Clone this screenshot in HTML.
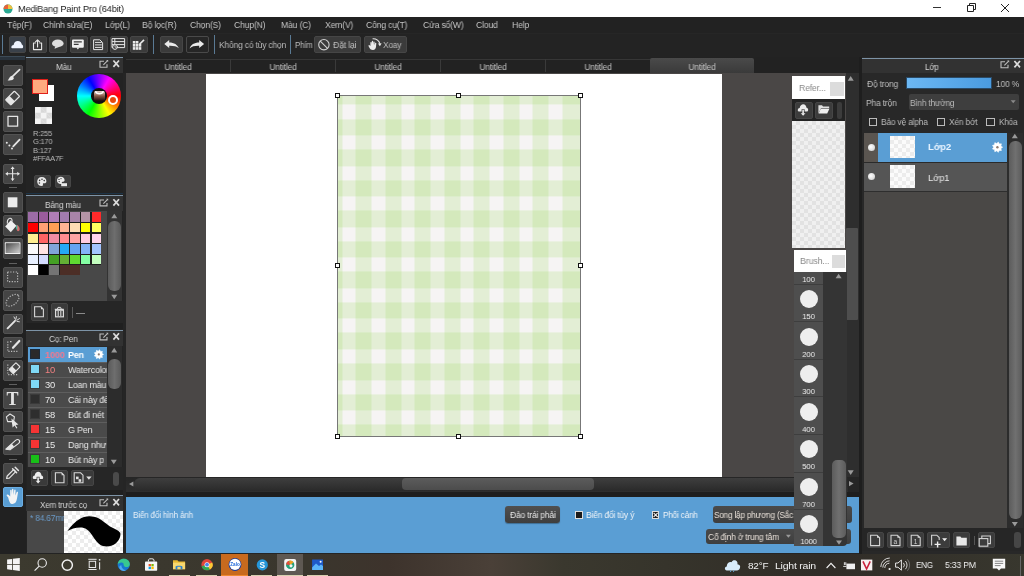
<!DOCTYPE html>
<html><head><meta charset="utf-8">
<style>
*{margin:0;padding:0;box-sizing:border-box}
html,body{width:1024px;height:576px;overflow:hidden;background:#252525;font-family:"Liberation Sans",sans-serif;position:relative}
.a{position:absolute}
.t{position:absolute;white-space:nowrap;color:#c8c8c8;font-size:9.2px;line-height:10px;letter-spacing:-0.2px;transform:scaleX(0.955);transform-origin:0 0}
.tc{transform-origin:50% 0}
.t{will-change:transform}
.btn{position:absolute;background:#3b3b3b;border:1px solid #464646;border-radius:2px}
.tool{position:absolute;left:3px;width:20px;height:20.5px;background:#454545;border:1px solid #525252;border-radius:2px}
.sep{position:absolute;background:#444}
.ph{position:absolute;background:#34312e;border-top:1px solid #8aa4b8}
.ico{position:absolute;overflow:visible}
</style></head><body>

<!-- ============ TITLE BAR ============ -->
<div class="a" style="left:0;top:0;width:1024px;height:17px;background:#fff"></div>
<svg class="ico" style="left:3px;top:4px" width="10" height="10" viewBox="0 0 10 10"><circle cx="5" cy="5" r="4.5" fill="#2aa892"/><path d="M5 .5A4.5 4.5 0 0 0 .5 5L5 5Z" fill="#e8623a"/><path d="M5 .5A4.5 4.5 0 0 1 9.5 5L5 5Z" fill="#f0c040"/></svg>
<div class="t" style="transform:scaleX(0.98);left:17.5px;top:4px;font-size:9.43px;color:#1a1a1a">MediBang Paint Pro (64bit)</div>
<div class="a" style="left:933px;top:7px;width:8px;height:1px;background:#333"></div>
<svg class="a" style="left:960px;top:0" width="20" height="16" viewBox="960 0 20 16"><path d="M967.5 5.5H973.5V11.5H967.5Z M969.5 5.5V3.5H975.5V9.5H973.5" fill="none" stroke="#222" stroke-width="1"/></svg>
<svg class="ico" style="left:1001px;top:4px" width="8" height="8" viewBox="0 0 8 8"><path d="M0 0L8 8M8 0L0 8" stroke="#222" stroke-width="1"/></svg>

<!-- ============ MENU BAR ============ -->
<div class="a" style="left:0;top:17px;width:1024px;height:16px;background:#222"></div>
<div class="t" style="transform:scaleX(0.94);transform-origin:0 0;color:#c4c4c4;left:7px;top:20px">Tệp(F)</div>
<div class="t" style="transform:scaleX(0.94);transform-origin:0 0;color:#c4c4c4;left:43px;top:20px">Chỉnh sửa(E)</div>
<div class="t" style="transform:scaleX(0.94);transform-origin:0 0;color:#c4c4c4;left:105px;top:20px">Lớp(L)</div>
<div class="t" style="transform:scaleX(0.94);transform-origin:0 0;color:#c4c4c4;left:142px;top:20px">Bộ lọc(R)</div>
<div class="t" style="transform:scaleX(0.94);transform-origin:0 0;color:#c4c4c4;left:190px;top:20px">Chọn(S)</div>
<div class="t" style="transform:scaleX(0.94);transform-origin:0 0;color:#c4c4c4;left:234px;top:20px">Chụp(N)</div>
<div class="t" style="transform:scaleX(0.94);transform-origin:0 0;color:#c4c4c4;left:281px;top:20px">Màu (C)</div>
<div class="t" style="transform:scaleX(0.94);transform-origin:0 0;color:#c4c4c4;left:325px;top:20px">Xem(V)</div>
<div class="t" style="transform:scaleX(0.94);transform-origin:0 0;color:#c4c4c4;left:366px;top:20px">Công cụ(T)</div>
<div class="t" style="transform:scaleX(0.94);transform-origin:0 0;color:#c4c4c4;left:423px;top:20px">Cửa sổ(W)</div>
<div class="t" style="transform:scaleX(0.94);transform-origin:0 0;color:#c4c4c4;left:476px;top:20px">Cloud</div>
<div class="t" style="transform:scaleX(0.94);transform-origin:0 0;color:#c4c4c4;left:512px;top:20px">Help</div>

<!-- ============ TOOLBAR ============ -->
<div class="a" style="left:0;top:33px;width:1024px;height:24px;background:#232323"></div>
<div class="a" style="left:2px;top:35px;width:1px;height:19px;background:#5a7a94"></div>
<div class="btn" style="left:9px;top:36px;width:17px;height:17px;background:#3a414a"></div>
<div class="btn" style="left:29px;top:36px;width:17.5px;height:17px"></div>
<div class="btn" style="left:49px;top:36px;width:17.5px;height:17px"></div>
<div class="btn" style="left:70px;top:36px;width:17.5px;height:17px"></div>
<div class="btn" style="left:90px;top:36px;width:17.5px;height:17px"></div>
<div class="btn" style="left:110px;top:36px;width:17.5px;height:17px"></div>
<div class="btn" style="left:130px;top:36px;width:17.5px;height:17px"></div>
<div class="a" style="left:153px;top:35px;width:1px;height:19px;background:#5a7a94"></div>
<div class="btn" style="left:160px;top:36px;width:23px;height:17px"></div>
<div class="btn" style="left:186px;top:36px;width:22.5px;height:17px;background:#262626;border-color:#4a4a4a"></div>
<div class="a" style="left:214px;top:35px;width:1px;height:19px;background:#5a7a94"></div>
<div class="t" style="left:219px;top:40px;font-size:8.90px;color:#bcbcbc">Không có tùy chọn</div>
<div class="a" style="left:290px;top:35px;width:1px;height:19px;background:#5a7a94"></div>
<div class="t" style="left:294.5px;top:41px;font-size:8.27px;color:#bcbcbc">Phím</div>
<div class="btn" style="left:313.5px;top:36px;width:47.5px;height:17px"></div>
<div class="t" style="left:333px;top:40px;font-size:9.12px;color:#bcbcbc">Đặt lại</div>
<div class="btn" style="left:364px;top:36px;width:42.5px;height:17px"></div>
<div class="t" style="left:383px;top:40px;font-size:8.80px;color:#bcbcbc">Xoay</div>

<!-- ============ LEFT TOOLS ============ -->
<div class="a" style="left:0;top:32.5px;width:1024px;height:1px;background:#262626"></div>
<div class="a" style="left:0;top:57px;width:26px;height:497px;background:#212121"></div>
<div class="a" style="left:0;top:56px;width:25px;height:4px;background:#2a333c;border-top:1px solid #3c4a56"></div>
<div class="tool" style="top:65.3px;"></div>
<div class="tool" style="top:88px;"></div>
<div class="tool" style="top:111px;"></div>
<div class="tool" style="top:134.3px;"></div>
<div class="tool" style="top:163.5px;"></div>
<div class="tool" style="top:192.2px;"></div>
<div class="tool" style="top:215px;"></div>
<div class="tool" style="top:238.3px;"></div>
<div class="tool" style="top:267.2px;"></div>
<div class="tool" style="top:290px;"></div>
<div class="tool" style="top:313.5px;"></div>
<div class="tool" style="top:337px;"></div>
<div class="tool" style="top:360px;"></div>
<div class="tool" style="top:388.2px;"></div>
<div class="tool" style="top:411.4px;"></div>
<div class="tool" style="top:434.9px;"></div>
<div class="tool" style="top:463.2px;"></div>
<div class="tool" style="top:486.5px;background:#5a9ed4;border-color:#6aaee4;"></div>
<div class="a" style="left:9px;top:159.3px;width:8px;height:1px;background:#606060"></div>
<div class="a" style="left:9px;top:187.4px;width:8px;height:1px;background:#606060"></div>
<div class="a" style="left:9px;top:262.7px;width:8px;height:1px;background:#606060"></div>
<div class="a" style="left:9px;top:384.4px;width:8px;height:1px;background:#606060"></div>
<div class="a" style="left:9px;top:459.4px;width:8px;height:1px;background:#606060"></div>

<!-- ============ LEFT PANELS ============ -->
<div class="a" style="left:26px;top:57px;width:97px;height:497px;background:#232323"></div>
<div class="a" style="left:26px;top:57px;width:97px;height:1px;background:#7d93a6"></div>
<div class="a" style="left:26px;top:58px;width:97px;height:14.5px;background:#323232"></div>
<div class="t" style="left:55.5px;top:61.5px;font-size:8.59px;color:#d4d4d4">Màu</div>
<div class="a" style="left:32px;top:78.7px;width:16px;height:15.5px;background:#ffaa7f;border:1.3px solid #e0201a"></div>
<div class="a" style="left:39.2px;top:94.2px;width:15.2px;height:6.8px;background:#fff"></div>
<div class="a" style="left:48px;top:85.4px;width:6.4px;height:9px;background:#fff"></div>
<div class="a" style="left:35px;top:106.6px;width:17.2px;height:17.3px;background:#f4f4f4;background-image:linear-gradient(45deg,#d8d8d8 25%,transparent 25%,transparent 75%,#d8d8d8 75%),linear-gradient(45deg,#d8d8d8 25%,transparent 25%,transparent 75%,#d8d8d8 75%);background-size:11.5px 11.5px;background-position:0 0,5.75px 5.75px"></div>
<div class="a" style="left:76.9px;top:73.9px;width:43.8px;height:44.2px;border-radius:50%;background:conic-gradient(from 0deg,#8000ff,#ff00ff 30deg,#ff0000 90deg,#ffff00 150deg,#00ff00 210deg,#00ffff 270deg,#0000ff 330deg,#8000ff 360deg)"></div>
<div class="a" style="left:91px;top:88.2px;width:16px;height:15.6px;border-radius:50%;background:#111"></div>
<div class="a" style="left:94px;top:90.8px;width:10.8px;height:10.4px;border-radius:2px;background:linear-gradient(#e8d0c8,#8a5a48 50%,#180c0a)"></div>
<svg class="a" style="left:0;top:0" width="1024" height="576" viewBox="0 0 1024 576"><path d="M95.4 91.2C96.6 94.6 102.2 94.6 103.4 91.2" fill="none" stroke="#fff" stroke-width="1.4"/></svg>
<div class="a" style="left:107.5px;top:95.1px;width:10.4px;height:10.4px;border-radius:50%;border:2.2px solid #fff;background:#e8480c"></div>
<div class="t" style="left:32.5px;top:130px;font-size:7.84px;line-height:8.3px;color:#bababa">R:255<br>G:170<br>B:127<br>#FFAA7F</div>
<div class="btn" style="left:34px;top:174.9px;width:16.7px;height:13.1px;background:#3e3e3e"></div>
<div class="btn" style="left:54.5px;top:174.9px;width:16.2px;height:13.1px;background:#3e3e3e"></div>
<div class="a" style="left:26px;top:193px;width:97px;height:1px;background:#1d3346"></div>
<div class="a" style="left:26px;top:195px;width:97px;height:1px;background:#7d93a6"></div>
<div class="a" style="left:26px;top:196px;width:97px;height:15px;background:#323232"></div>
<div class="t" style="left:44.8px;top:199.5px;font-size:8.59px;color:#d4d4d4">Bảng màu</div>
<div class="a" style="left:27px;top:211px;width:80px;height:90px;background:#484848"></div>
<div class="a" style="left:27.6px;top:211.8px;width:73.6px;height:53px;background:#1e1e1e"></div>
<div class="a" style="left:27.6px;top:264.7px;width:52.6px;height:10.6px;background:#1e1e1e"></div>
<div class="a" style="left:28.20px;top:212.40px;width:9.4px;height:9.4px;background:#9c6ca6"></div>
<div class="a" style="left:38.75px;top:212.40px;width:9.4px;height:9.4px;background:#9a5c9c"></div>
<div class="a" style="left:49.30px;top:212.40px;width:9.4px;height:9.4px;background:#b07eb6"></div>
<div class="a" style="left:59.85px;top:212.40px;width:9.4px;height:9.4px;background:#a27cae"></div>
<div class="a" style="left:70.40px;top:212.40px;width:9.4px;height:9.4px;background:#a884a8"></div>
<div class="a" style="left:80.95px;top:212.40px;width:9.4px;height:9.4px;background:#b494a6"></div>
<div class="a" style="left:91.50px;top:212.40px;width:9.4px;height:9.4px;background:#ff2a2a"></div>
<div class="a" style="left:28.20px;top:223.00px;width:9.4px;height:9.4px;background:#ff0000"></div>
<div class="a" style="left:38.75px;top:223.00px;width:9.4px;height:9.4px;background:#ffa074"></div>
<div class="a" style="left:49.30px;top:223.00px;width:9.4px;height:9.4px;background:#ffa054"></div>
<div class="a" style="left:59.85px;top:223.00px;width:9.4px;height:9.4px;background:#ffb494"></div>
<div class="a" style="left:70.40px;top:223.00px;width:9.4px;height:9.4px;background:#ffdcb4"></div>
<div class="a" style="left:80.95px;top:223.00px;width:9.4px;height:9.4px;background:#ffff00"></div>
<div class="a" style="left:91.50px;top:223.00px;width:9.4px;height:9.4px;background:#ffff60"></div>
<div class="a" style="left:28.20px;top:233.60px;width:9.4px;height:9.4px;background:#ffee90"></div>
<div class="a" style="left:38.75px;top:233.60px;width:9.4px;height:9.4px;background:#ff6464"></div>
<div class="a" style="left:49.30px;top:233.60px;width:9.4px;height:9.4px;background:#f08ca4"></div>
<div class="a" style="left:59.85px;top:233.60px;width:9.4px;height:9.4px;background:#ff8c90"></div>
<div class="a" style="left:70.40px;top:233.60px;width:9.4px;height:9.4px;background:#ffa4a4"></div>
<div class="a" style="left:80.95px;top:233.60px;width:9.4px;height:9.4px;background:#ffcce0"></div>
<div class="a" style="left:91.50px;top:233.60px;width:9.4px;height:9.4px;background:#ffd4ec"></div>
<div class="a" style="left:28.20px;top:244.20px;width:9.4px;height:9.4px;background:#fafafa"></div>
<div class="a" style="left:38.75px;top:244.20px;width:9.4px;height:9.4px;background:#ffe4e4"></div>
<div class="a" style="left:49.30px;top:244.20px;width:9.4px;height:9.4px;background:#80a4d8"></div>
<div class="a" style="left:59.85px;top:244.20px;width:9.4px;height:9.4px;background:#24a8f4"></div>
<div class="a" style="left:70.40px;top:244.20px;width:9.4px;height:9.4px;background:#64a4f0"></div>
<div class="a" style="left:80.95px;top:244.20px;width:9.4px;height:9.4px;background:#84b4f8"></div>
<div class="a" style="left:91.50px;top:244.20px;width:9.4px;height:9.4px;background:#a4c4ff"></div>
<div class="a" style="left:28.20px;top:254.80px;width:9.4px;height:9.4px;background:#e8f0ff"></div>
<div class="a" style="left:38.75px;top:254.80px;width:9.4px;height:9.4px;background:#d4dcff"></div>
<div class="a" style="left:49.30px;top:254.80px;width:9.4px;height:9.4px;background:#44a024"></div>
<div class="a" style="left:59.85px;top:254.80px;width:9.4px;height:9.4px;background:#64b034"></div>
<div class="a" style="left:70.40px;top:254.80px;width:9.4px;height:9.4px;background:#60d830"></div>
<div class="a" style="left:80.95px;top:254.80px;width:9.4px;height:9.4px;background:#84ffa4"></div>
<div class="a" style="left:91.50px;top:254.80px;width:9.4px;height:9.4px;background:#c4ffc0"></div>
<div class="a" style="left:28.20px;top:265.40px;width:9.4px;height:9.4px;background:#ffffff"></div>
<div class="a" style="left:38.75px;top:265.40px;width:9.4px;height:9.4px;background:#000000"></div>
<div class="a" style="left:49.30px;top:265.40px;width:9.4px;height:9.4px;background:#747474"></div>
<div class="a" style="left:59.85px;top:265.40px;width:10.55px;height:9.4px;background:#4c2e26"></div>
<div class="a" style="left:70.40px;top:265.40px;width:9.4px;height:9.4px;background:#4c2e26"></div>
<div class="a" style="left:107px;top:211px;width:15px;height:90px;background:#333333"></div>
<div class="a" style="left:108.3px;top:220.7px;width:12.5px;height:70.8px;border-radius:6px;background:linear-gradient(90deg,#5a5a5a,#6e6e6e,#5a5a5a)"></div>
<div class="a" style="left:27px;top:301px;width:96px;height:22px;background:#262626"></div>
<div class="btn" style="left:31px;top:303.3px;width:16.75px;height:18px;background:#3a3a3a"></div>
<div class="btn" style="left:51.3px;top:303.3px;width:16.5px;height:18px;background:#3a3a3a"></div>
<div class="a" style="left:72.4px;top:307px;width:1px;height:11px;background:#5a5a5a"></div>
<div class="a" style="left:76px;top:313px;width:9px;height:1px;background:#8a8a8a"></div>
<div class="a" style="left:26px;top:323px;width:97px;height:6px;background:#202020"></div>
<div class="a" style="left:26px;top:329.5px;width:97px;height:1px;background:#7d93a6"></div>
<div class="a" style="left:26px;top:330.5px;width:97px;height:15px;background:#323232"></div>
<div class="t" style="left:49px;top:334px;font-size:8.69px;color:#d4d4d4">Cọ: Pen</div>
<div class="a" style="left:27px;top:345.5px;width:80px;height:121px;background:#2a2a2a"></div>
<div class="a" style="left:107px;top:345.5px;width:15px;height:121px;background:#2c2c2c"></div>
<div class="a" style="left:108.3px;top:358.8px;width:12.5px;height:30px;border-radius:6px;background:linear-gradient(90deg,#5a5a5a,#6e6e6e,#5a5a5a)"></div>
<div class="a" style="left:28.2px;top:347px;width:78.5px;height:14.5px;background:#5a9ed4;overflow:hidden"><div class="a" style="left:2px;top:2.3px;width:10.2px;height:10.2px;background:#2a2a2a;border:1px solid #1a2a3a"></div><div class="t" style="left:16.5px;top:3.2px;font-size:9.6px;color:#f07890;font-weight:bold">1000</div><div class="t" style="left:40.2px;top:3.2px;font-size:9.4px;color:#fff;font-weight:bold">Pen</div></div>
<div class="a" style="left:28.2px;top:362px;width:78.5px;height:14.5px;background:#4a4a4a;overflow:hidden"><div class="a" style="left:2px;top:2.3px;width:10.2px;height:10.2px;background:#7fd8f4;border:1px solid #3a3a3a"></div><div class="t" style="left:16.5px;top:3.2px;font-size:9.4px;color:#f08080">10</div><div class="t" style="left:40.2px;top:3.2px;font-size:9.4px;color:#e8e8e8">Watercolor</div></div>
<div class="a" style="left:28.2px;top:377px;width:78.5px;height:14.5px;background:#4a4a4a;overflow:hidden"><div class="a" style="left:2px;top:2.3px;width:10.2px;height:10.2px;background:#7fd8f4;border:1px solid #3a3a3a"></div><div class="t" style="left:16.5px;top:3.2px;font-size:9.4px;color:#e8e8e8">30</div><div class="t" style="left:40.2px;top:3.2px;font-size:9.4px;color:#e8e8e8">Loan màu</div></div>
<div class="a" style="left:28.2px;top:392px;width:78.5px;height:14.5px;background:#4a4a4a;overflow:hidden"><div class="a" style="left:2px;top:2.3px;width:10.2px;height:10.2px;background:#2e2e2e;border:1px solid #3a3a3a"></div><div class="t" style="left:16.5px;top:3.2px;font-size:9.4px;color:#e8e8e8">70</div><div class="t" style="left:40.2px;top:3.2px;font-size:9.4px;color:#e8e8e8">Cái này để</div></div>
<div class="a" style="left:28.2px;top:407px;width:78.5px;height:14.5px;background:#4a4a4a;overflow:hidden"><div class="a" style="left:2px;top:2.3px;width:10.2px;height:10.2px;background:#2e2e2e;border:1px solid #3a3a3a"></div><div class="t" style="left:16.5px;top:3.2px;font-size:9.4px;color:#e8e8e8">58</div><div class="t" style="left:40.2px;top:3.2px;font-size:9.4px;color:#e8e8e8">Bút đi nét</div></div>
<div class="a" style="left:28.2px;top:422px;width:78.5px;height:14.5px;background:#4a4a4a;overflow:hidden"><div class="a" style="left:2px;top:2.3px;width:10.2px;height:10.2px;background:#f43434;border:1px solid #3a3a3a"></div><div class="t" style="left:16.5px;top:3.2px;font-size:9.4px;color:#e8e8e8">15</div><div class="t" style="left:40.2px;top:3.2px;font-size:9.4px;color:#e8e8e8">G Pen</div></div>
<div class="a" style="left:28.2px;top:437px;width:78.5px;height:14.5px;background:#4a4a4a;overflow:hidden"><div class="a" style="left:2px;top:2.3px;width:10.2px;height:10.2px;background:#f43434;border:1px solid #3a3a3a"></div><div class="t" style="left:16.5px;top:3.2px;font-size:9.4px;color:#e8e8e8">15</div><div class="t" style="left:40.2px;top:3.2px;font-size:9.4px;color:#e8e8e8">Dạng như</div></div>
<div class="a" style="left:28.2px;top:452px;width:78.5px;height:14.5px;background:#4a4a4a;overflow:hidden"><div class="a" style="left:2px;top:2.3px;width:10.2px;height:10.2px;background:#18c018;border:1px solid #3a3a3a"></div><div class="t" style="left:16.5px;top:3.2px;font-size:9.4px;color:#e8e8e8">10</div><div class="t" style="left:40.2px;top:3.2px;font-size:9.4px;color:#e8e8e8">Bút này p</div></div>
<div class="a" style="left:28.2px;top:361.5px;width:78.5px;height:0.5px;background:#5e5e5e"></div>
<div class="a" style="left:28.2px;top:376.5px;width:78.5px;height:0.5px;background:#5e5e5e"></div>
<div class="a" style="left:28.2px;top:391.5px;width:78.5px;height:0.5px;background:#5e5e5e"></div>
<div class="a" style="left:28.2px;top:406.5px;width:78.5px;height:0.5px;background:#5e5e5e"></div>
<div class="a" style="left:28.2px;top:421.5px;width:78.5px;height:0.5px;background:#5e5e5e"></div>
<div class="a" style="left:28.2px;top:436.5px;width:78.5px;height:0.5px;background:#5e5e5e"></div>
<div class="a" style="left:28.2px;top:451.5px;width:78.5px;height:0.5px;background:#5e5e5e"></div>
<div class="a" style="left:28.2px;top:466.5px;width:78.5px;height:0.5px;background:#5e5e5e"></div>
<div class="a" style="left:27px;top:466.5px;width:96px;height:23px;background:#262626"></div>
<div class="btn" style="left:31.3px;top:469.8px;width:16.6px;height:16.6px;background:#3a3a3a"></div>
<div class="btn" style="left:51.3px;top:469.8px;width:16.6px;height:16.6px;background:#3a3a3a"></div>
<div class="btn" style="left:71.3px;top:469.8px;width:22.4px;height:16.6px;background:#3a3a3a"></div>
<div class="a" style="left:112.7px;top:472px;width:6.7px;height:14px;border-radius:3px;background:#4a4a4a"></div>
<div class="a" style="left:26px;top:489.5px;width:97px;height:5px;background:#202020"></div>
<div class="a" style="left:26px;top:495px;width:97px;height:1px;background:#7d93a6"></div>
<div class="a" style="left:26px;top:496px;width:97px;height:14.6px;background:#323232"></div>
<div class="t" style="left:39.5px;top:499.5px;font-size:8.48px;color:#d4d4d4">Xem trước cọ</div>
<div class="a" style="left:27px;top:510.6px;width:37px;height:42.5px;background:#484848"></div>
<div class="t" style="left:30.3px;top:513px;font-size:8.80px;color:#6a9ac8">* 84.67mm</div>
<div class="a" style="left:63.5px;top:510.6px;width:59.5px;height:42.5px;background:#fff;background-image:linear-gradient(45deg,#ececec 25%,transparent 25%,transparent 75%,#ececec 75%),linear-gradient(45deg,#ececec 25%,transparent 25%,transparent 75%,#ececec 75%);background-size:8px 8px;background-position:0 0,4px 4px"></div>
<svg class="a" style="left:0;top:0" width="1024" height="576" viewBox="0 0 1024 576"><path d="M67.3 531C71 526 77 519 84 516.9C89 515.5 94 516.2 98 518C102 520 106 524 110 526.4C114 528.4 118.6 530 120.3 533C121 536.4 119 540.4 116 543.2C112 546.2 107 547 103 546C99 545 96 541 93 536.5C90 531.8 87 528.4 82 527.6C77 527 71 529 67.3 531Z" fill="#000"/></svg>

<!-- ============ TABS ============ -->
<div class="a" style="left:123px;top:57px;width:739px;height:16px;background:#222"></div>
<div class="a" style="left:126px;top:58.5px;width:524px;height:1px;background:#363636"></div>
<div class="a" style="left:650px;top:57.5px;width:104px;height:15.5px;background:linear-gradient(#4a4a4a,#3a3a3a);border-radius:2px 2px 0 0"></div>
<div class="a" style="left:230px;top:59px;width:1px;height:13px;background:#3a3a3a"></div>
<div class="a" style="left:335px;top:59px;width:1px;height:13px;background:#3a3a3a"></div>
<div class="a" style="left:440px;top:59px;width:1px;height:13px;background:#3a3a3a"></div>
<div class="a" style="left:545px;top:59px;width:1px;height:13px;background:#3a3a3a"></div>
<div class="t tc" style="left:158px;width:40px;text-align:center;top:61.5px;font-size:8.90px;color:#c4c4c4">Untitled</div>
<div class="t tc" style="left:262.5px;width:40px;text-align:center;top:61.5px;font-size:8.90px;color:#c4c4c4">Untitled</div>
<div class="t tc" style="left:367.5px;width:40px;text-align:center;top:61.5px;font-size:8.90px;color:#c4c4c4">Untitled</div>
<div class="t tc" style="left:472.5px;width:40px;text-align:center;top:61.5px;font-size:8.90px;color:#c4c4c4">Untitled</div>
<div class="t tc" style="left:577.5px;width:40px;text-align:center;top:61.5px;font-size:8.90px;color:#c4c4c4">Untitled</div>
<div class="t tc" style="left:681.5px;width:40px;text-align:center;top:61.5px;font-size:8.90px;color:#c4c4c4">Untitled</div>

<!-- ============ CANVAS AREA ============ -->
<!-- h scrollbar -->
<div class="a" style="left:126px;top:477px;width:722px;height:20px;background:#2b2b2b"></div>
<div class="a" style="left:126px;top:477px;width:722px;height:15px;background:linear-gradient(#262626,#2e2e2e)"></div>
<div class="a" style="left:134px;top:477.5px;width:712px;height:13.5px;background:linear-gradient(#3e3e3e,#2a2a2a);border-radius:6px"></div>
<div class="a" style="left:402px;top:477.8px;width:192px;height:12.6px;background:linear-gradient(#5c5c5c,#4c4c4c);border-radius:4px"></div>
<div class="a" style="left:126px;top:492px;width:733px;height:5px;background:#1e1e1e"></div>


<div class="a" style="left:126px;top:497px;width:733px;height:56px;background:#5a9ed4"></div>
<div class="t" style="left:133px;top:509.5px;font-size:8.5px;color:#e8f0f8">Biến đổi hình ảnh</div>
<div class="a" style="left:505px;top:506px;width:55.3px;height:17px;background:linear-gradient(#505050,#3e3e3e);border-radius:3px;box-shadow:0 1px 1px rgba(0,0,0,.3)"></div>
<div class="t" style="left:510.3px;top:509.5px;font-size:8.90px;color:#e4e4e4">Đảo trái phải</div>
<div class="a" style="left:575px;top:511.2px;width:7.5px;height:7.5px;background:#1a1a1a;border:1px solid #ddd"></div>
<div class="t" style="left:586.3px;top:509.5px;font-size:8.90px;color:#f0f4f8">Biến đổi tùy ý</div>
<div class="a" style="left:651.9px;top:511.2px;width:7.5px;height:7.5px;background:#1a1a1a;border:1px solid #ddd"></div>
<div class="t" style="left:663.4px;top:509.5px;font-size:8.59px;color:#f0f4f8">Phối cảnh</div>
<div class="a" style="left:712.5px;top:506px;width:139px;height:16.5px;background:linear-gradient(#4a4a4a,#3e3e3e);border-radius:3px"></div>
<div class="t" style="left:714.4px;top:509.5px;font-size:8.59px;color:#e8e0d8">Song lập phương (Sắc nét)</div>
<div class="a" style="left:706.2px;top:528.7px;width:145px;height:15px;background:linear-gradient(#4a4a4a,#3e3e3e);border-radius:3px"></div>
<div class="t" style="left:708px;top:531.5px;font-size:8.80px;color:#e8e0d8">Cố định ở trung tâm</div>

<div class="a" style="left:126px;top:73px;width:722px;height:404px;background:#4a4746"></div>
<div class="a" style="left:206px;top:74px;width:516px;height:403px;background:#fff"></div>
<div class="a" style="left:338px;top:96px;width:242px;height:340px;background-color:#f6f4f4;
background-image:repeating-linear-gradient(90deg,rgba(150,215,90,0.2) 0px,rgba(150,215,90,0.2) 16px,rgba(150,215,90,0) 16px,rgba(150,215,90,0) 29.47px),repeating-linear-gradient(180deg,rgba(150,215,90,0.2) 0px,rgba(150,215,90,0.2) 16.5px,rgba(150,215,90,0) 16.5px,rgba(150,215,90,0) 30.56px);
background-position:-11.5px 0,0 -7.6px"></div>
<div class="a" style="left:337px;top:95px;width:244px;height:342px;border:1px solid #777"></div>
<div class="a" style="left:335.0px;top:93.0px;width:5px;height:5px;background:#fff;border:1px solid #111"></div>
<div class="a" style="left:456.0px;top:93.0px;width:5px;height:5px;background:#fff;border:1px solid #111"></div>
<div class="a" style="left:578.0px;top:93.0px;width:5px;height:5px;background:#fff;border:1px solid #111"></div>
<div class="a" style="left:335.0px;top:263.0px;width:5px;height:5px;background:#fff;border:1px solid #111"></div>
<div class="a" style="left:578.0px;top:263.0px;width:5px;height:5px;background:#fff;border:1px solid #111"></div>
<div class="a" style="left:335.0px;top:434.0px;width:5px;height:5px;background:#fff;border:1px solid #111"></div>
<div class="a" style="left:456.0px;top:434.0px;width:5px;height:5px;background:#fff;border:1px solid #111"></div>
<div class="a" style="left:578.0px;top:434.0px;width:5px;height:5px;background:#fff;border:1px solid #111"></div>
<div class="a" style="left:792px;top:76px;width:53px;height:23px;background:#fff"></div>
<div class="t" style="left:799px;top:83px;font-size:9.12px;color:#8a8a8a">Refer...</div>
<div class="a" style="left:830px;top:82px;width:14px;height:13.5px;background:#dcdcdc"></div>
<div class="a" style="left:792px;top:99px;width:53px;height:22px;background:#232323"></div>
<div class="btn" style="left:795px;top:101.8px;width:17.6px;height:17.2px;background:#3c3c3c"></div>
<div class="btn" style="left:815.3px;top:101.8px;width:17.7px;height:17.2px;background:#3c3c3c"></div>
<div class="a" style="left:836.6px;top:101.8px;width:5.5px;height:17.2px;background:#3c3c3c;border-radius:2px"></div>
<div class="a" style="left:792.3px;top:121px;width:53.2px;height:126.5px;background:#f0f0f0;background-image:linear-gradient(45deg,#e2e2e2 25%,transparent 25%,transparent 75%,#e2e2e2 75%),linear-gradient(45deg,#e2e2e2 25%,transparent 25%,transparent 75%,#e2e2e2 75%);background-size:8px 8px;background-position:0 0,4px 4px"></div>
<div class="a" style="left:845.5px;top:73px;width:13px;height:404px;background:#2e2e2e"></div>
<div class="a" style="left:846px;top:228px;width:12px;height:92px;background:#4e4e4e;border-radius:1px"></div>
<div class="a" style="left:858.5px;top:73px;width:3.5px;height:424px;background:#3a3a3a"></div>
<div class="a" style="left:794px;top:249.6px;width:52px;height:22.3px;background:#fff"></div>
<div class="t" style="left:800px;top:256px;font-size:9.33px;color:#8a8a8a">Brush...</div>
<div class="a" style="left:831.5px;top:255px;width:13px;height:13px;background:#dcdcdc"></div>
<div class="a" style="left:794px;top:272px;width:29px;height:274px;background:#4e4e4e"></div>
<div class="a" style="left:822.8px;top:272px;width:24.5px;height:274px;background:#343434;border-radius:0 0 4px 0"></div>
<div class="a" style="left:832px;top:460px;width:13.5px;height:78px;background:linear-gradient(90deg,#5c5c5c,#707070,#5c5c5c);border-radius:5px"></div>
<div class="t tc" style="left:794px;width:29px;text-align:center;top:274.5px;font-size:8.06px;color:#f0f0f0">100</div>
<div class="a" style="left:794px;top:283.8px;width:29px;height:1px;background:#3e3e3e"></div>
<div class="a" style="left:800px;top:290.0px;width:18px;height:18px;border-radius:50%;background:#eeeeee"></div>
<div class="t tc" style="left:794px;width:29px;text-align:center;top:312.1px;font-size:8.06px;color:#f0f0f0">150</div>
<div class="a" style="left:794px;top:321.3px;width:29px;height:1px;background:#3e3e3e"></div>
<div class="a" style="left:800px;top:327.6px;width:18px;height:18px;border-radius:50%;background:#eeeeee"></div>
<div class="t tc" style="left:794px;width:29px;text-align:center;top:349.6px;font-size:8.06px;color:#f0f0f0">200</div>
<div class="a" style="left:794px;top:358.9px;width:29px;height:1px;background:#3e3e3e"></div>
<div class="a" style="left:800px;top:365.1px;width:18px;height:18px;border-radius:50%;background:#eeeeee"></div>
<div class="t tc" style="left:794px;width:29px;text-align:center;top:387.1px;font-size:8.06px;color:#f0f0f0">300</div>
<div class="a" style="left:794px;top:396.4px;width:29px;height:1px;background:#3e3e3e"></div>
<div class="a" style="left:800px;top:402.6px;width:18px;height:18px;border-radius:50%;background:#eeeeee"></div>
<div class="t tc" style="left:794px;width:29px;text-align:center;top:424.7px;font-size:8.06px;color:#f0f0f0">400</div>
<div class="a" style="left:794px;top:433.9px;width:29px;height:1px;background:#3e3e3e"></div>
<div class="a" style="left:800px;top:440.2px;width:18px;height:18px;border-radius:50%;background:#eeeeee"></div>
<div class="t tc" style="left:794px;width:29px;text-align:center;top:462.2px;font-size:8.06px;color:#f0f0f0">500</div>
<div class="a" style="left:794px;top:471.5px;width:29px;height:1px;background:#3e3e3e"></div>
<div class="a" style="left:800px;top:477.8px;width:18px;height:18px;border-radius:50%;background:#eeeeee"></div>
<div class="t tc" style="left:794px;width:29px;text-align:center;top:499.8px;font-size:8.06px;color:#f0f0f0">700</div>
<div class="a" style="left:794px;top:509.0px;width:29px;height:1px;background:#3e3e3e"></div>
<div class="a" style="left:800px;top:515.3px;width:18px;height:18px;border-radius:50%;background:#eeeeee"></div>
<div class="t tc" style="left:794px;width:29px;text-align:center;top:537.3px;font-size:8.06px;color:#f0f0f0">1000</div>

<!-- ============ BLUE OPTIONS PANEL ============ -->

<!-- ============ LAYER PANEL ============ -->
<div class="a" style="left:862px;top:57px;width:162px;height:497px;background:#282828"></div>
<div class="a" style="left:858.5px;top:57px;width:3.5px;height:497px;background:#1e1e1e"></div>
<div class="a" style="left:862px;top:57.5px;width:162px;height:1px;background:#7d93a6"></div>
<div class="a" style="left:862px;top:58.5px;width:162px;height:14px;background:#323232"></div>
<div class="t" style="left:924.5px;top:62px;font-size:8.37px;color:#d4d4d4">Lớp</div>
<div class="t" style="left:866.5px;top:79.0px;font-size:8.90px;color:#bfbfbf">Độ trong</div>
<div class="a" style="left:905.5px;top:77.4px;width:86px;height:11.6px;background:linear-gradient(90deg,#6cb8f4,#4a9be0);border:1px solid #2a4a66"></div>
<div class="t" style="left:996.3px;top:79.0px;font-size:8.90px;color:#bfbfbf">100 %</div>
<div class="t" style="left:866px;top:98.0px;font-size:8.90px;color:#bfbfbf">Pha trộn</div>
<div class="a" style="left:908.8px;top:94.3px;width:110.4px;height:15.5px;background:#3e3e3e;border-radius:2px"></div>
<div class="t" style="left:910px;top:98.0px;font-size:8.69px;color:#bababa">Bình thường</div>
<div class="a" style="left:869px;top:117.6px;width:8.2px;height:8.2px;border:1px solid #bbb"></div>
<div class="t" style="left:880.6px;top:117px;font-size:8.80px;color:#bababa">Bảo vệ alpha</div>
<div class="a" style="left:937.2px;top:117.6px;width:8.2px;height:8.2px;border:1px solid #bbb"></div>
<div class="t" style="left:949.2px;top:117px;font-size:8.80px;color:#bababa">Xén bớt</div>
<div class="a" style="left:986.4px;top:117.6px;width:8.2px;height:8.2px;border:1px solid #bbb"></div>
<div class="t" style="left:998.7px;top:117px;font-size:8.59px;color:#bababa">Khóa</div>
<div class="a" style="left:863.9px;top:132.5px;width:143.5px;height:396px;background:#4a4846"></div>
<div class="a" style="left:863.9px;top:132.9px;width:143.5px;height:29px;background:#5a9ed4"></div>
<div class="a" style="left:863.9px;top:132.9px;width:14.3px;height:29px;background:#5a5550"></div>
<div class="a" style="left:863.9px;top:161.9px;width:143.5px;height:1px;background:#2a2a2a"></div>
<div class="a" style="left:863.9px;top:163px;width:143.5px;height:27.8px;background:#555555"></div>
<div class="a" style="left:863.9px;top:190.8px;width:143.5px;height:1px;background:#2e2e2e"></div>
<div class="a" style="left:867.6px;top:143.5px;width:7px;height:7px;border-radius:50%;background:radial-gradient(circle at 40% 40%,#fff,#c8c8c8)"></div>
<div class="a" style="left:867.6px;top:173.4px;width:7px;height:7px;border-radius:50%;background:radial-gradient(circle at 40% 40%,#fff,#c8c8c8)"></div>
<div class="a" style="left:889.6px;top:135.8px;width:25.8px;height:22.2px;background:#fbfbfb;background-image:linear-gradient(45deg,#ececec 25%,transparent 25%,transparent 75%,#ececec 75%),linear-gradient(45deg,#ececec 25%,transparent 25%,transparent 75%,#ececec 75%);background-size:8px 8px;background-position:0 0,4px 4px"></div>
<div class="a" style="left:889.6px;top:165px;width:25.8px;height:23.3px;background:#fbfbfb;background-image:linear-gradient(45deg,#ececec 25%,transparent 25%,transparent 75%,#ececec 75%),linear-gradient(45deg,#ececec 25%,transparent 25%,transparent 75%,#ececec 75%);background-size:8px 8px;background-position:0 0,4px 4px"></div>
<div class="t" style="left:928px;top:142px;font-size:9.96px;color:#e8f4ff;font-weight:bold">Lớp2</div>
<div class="t" style="left:928px;top:172.5px;font-size:9.96px;color:#e8e8e8">Lớp1</div>
<div class="a" style="left:1007.4px;top:132.5px;width:16px;height:396px;background:#2c2c2c"></div>
<div class="a" style="left:1008.6px;top:140.8px;width:13.9px;height:378.6px;background:linear-gradient(90deg,#5c5c5c,#707070,#5c5c5c);border-radius:6px"></div>
<div class="a" style="left:862px;top:528.4px;width:162px;height:23px;background:#262626"></div>
<div class="btn" style="left:866.7px;top:532.2px;width:16.9px;height:16px;background:#3c3c3c"></div>
<div class="btn" style="left:887.2px;top:532.2px;width:16.7px;height:16px;background:#3c3c3c"></div>
<div class="btn" style="left:907.2px;top:532.2px;width:16.9px;height:16px;background:#3c3c3c"></div>
<div class="btn" style="left:927.4px;top:532.2px;width:22.4px;height:16px;background:#3c3c3c"></div>
<div class="btn" style="left:953.1px;top:532.2px;width:16.9px;height:16px;background:#3c3c3c"></div>
<div class="btn" style="left:978.2px;top:532.2px;width:17.3px;height:16px;background:#3c3c3c"></div>
<div class="a" style="left:974px;top:536px;width:1px;height:9px;background:#555"></div>
<div class="a" style="left:1014.3px;top:532.2px;width:6.7px;height:16px;border-radius:3px;background:#464646"></div>

<!-- ============ TASKBAR ============ -->
<div class="a" style="left:0;top:553.5px;width:1024px;height:22.5px;background:linear-gradient(90deg,#3c3a2f 0%,#3a362d 30%,#3d332c 38%,#4a4038 48%,#3a382e 55%,#36342b 65%,#302c27 80%,#38372e 100%)"></div>
<div class="a" style="left:221.2px;top:553.5px;width:26.7px;height:22.5px;background:#c86a1e"></div>
<div class="a" style="left:276.9px;top:553.5px;width:26.3px;height:22.5px;background:#5e5852"></div>
<div class="a" style="left:168.8px;top:574.5px;width:21.1px;height:1.5px;background:#d8d0b0"></div>
<div class="a" style="left:196px;top:574.5px;width:21.0px;height:1.5px;background:#d8d0b0"></div>
<div class="a" style="left:221.2px;top:574.5px;width:26.7px;height:1.5px;background:#f08a30"></div>
<div class="a" style="left:251.4px;top:574.5px;width:21.1px;height:1.5px;background:#d8d0b0"></div>
<div class="a" style="left:276.9px;top:574.5px;width:26.3px;height:1.5px;background:#d8d0b0"></div>
<div class="a" style="left:306.7px;top:574.5px;width:21.1px;height:1.5px;background:#d8d0b0"></div>
<div class="t" style="transform:scaleX(1.06);left:747.6px;top:560.6px;font-size:9.4px;color:#f0f0f0">82°F</div>
<div class="t" style="transform:scaleX(1.12);left:774.8px;top:560.6px;font-size:9.4px;color:#f0f0f0">Light rain</div>
<div class="t" style="transform:scaleX(0.9);left:916.4px;top:559.8px;font-size:9px;color:#f0f0f0">ENG</div>
<div class="t" style="transform:scaleX(0.9);left:945.4px;top:559.8px;font-size:9.6px;color:#f0f0f0">5:33 PM</div>
<div class="a" style="left:1020px;top:556px;width:1px;height:20px;background:#666"></div>
<!-- ICONS1 -->
<svg class="a" style="left:0;top:0;z-index:50" width="1024" height="576" viewBox="0 0 1024 576">
<g fill="none" stroke="#e6e6e6" stroke-width="1.1" stroke-linecap="round" stroke-linejoin="round">
<!-- toolbar: share -->
<path d="M35.3 43H33.5V49.6H41.6V43H39.8"/>
<path d="M37.55 47V39.8M35.5 41.9L37.55 39.8L39.6 41.9"/>
<!-- doc -->
<path d="M94 39.8H99.8L102.6 42.6V49.6H94Z" stroke-width="1"/>
<path d="M95.4 42.4H101.4M95.4 44.9H101.4M95.4 47.4H101.4" stroke-width="1"/>
<!-- table clock -->
<rect x="112.4" y="38.6" width="12.2" height="9" stroke-width="1"/>
<path d="M112.4 41.6H124.6M112.4 44.6H124.6M114.8 38.6V44.6" stroke-width="1"/>
<circle cx="115" cy="47" r="2.4" fill="#3b3b3b" stroke-width="1"/><path d="M115 45.8V47.2H116.2" stroke-width="0.7"/>
<!-- no sign -->
<circle cx="323.9" cy="44.7" r="5.2" stroke="#d0d0d0" stroke-width="1.1"/>
<path d="M320.3 41.1L327.5 48.3" stroke="#d0d0d0" stroke-width="1.1"/>
</g>
<g fill="#eaeaea">
<!-- cloud -->
<path d="M12 48.3C11 48.3 11 45.2 13.6 45.1C13.8 42.6 15.6 41 17.8 41C20.2 41 21.6 42.6 21.8 44.6C23.4 44.8 23.6 48.3 22.3 48.3Z" fill="#eef4ff"/>
<!-- speech bubble -->
<ellipse cx="57.8" cy="43.4" rx="5.8" ry="3.8" fill="#dedede"/>
<path d="M55.2 46.3L54.6 48.8L58.6 46.9Z" fill="#dedede"/>
<!-- comment -->
<rect x="72" y="39.4" width="11.8" height="8.4" rx="1" fill="#f0f0f0"/>
<path d="M76.4 47.6L77.9 49.4L79.4 47.6Z" fill="#f0f0f0"/>
<path d="M73.8 41.9H81.8M73.8 44.4H78.6" stroke="#3b3b3b" stroke-width="1.2"/>
<!-- grid pencil -->
<rect x="132.8" y="41" width="2.6" height="2.6"/><rect x="135.8" y="41" width="2.6" height="2.6"/>
<rect x="132.8" y="44" width="2.6" height="2.7"/><rect x="135.8" y="44" width="2.6" height="2.7"/><rect x="138.8" y="44" width="2.5" height="2.7"/>
<rect x="132.8" y="47.1" width="2.6" height="2.7"/><rect x="135.8" y="47.1" width="2.6" height="2.7"/><rect x="138.8" y="47.1" width="2.5" height="2.7"/>
<path d="M139.2 43.4L143.4 39.2L144.6 40.4L140.4 44.6L138.8 44.9Z"/>
<!-- undo -->
<path d="M164.3 44.1L169.2 40.1V42.4C174.2 42.4 177.6 44.6 178.7 48.3C176.6 46.3 173.6 45.7 169.2 45.8V48.1Z"/>
<!-- redo -->
<path d="M204.1 44.1L199.2 40.1V42.4C194.2 42.4 190.8 44.6 189.6 48.5C191.8 46.3 194.8 45.7 199.2 45.8V48.1Z"/>
<!-- hand rotate -->
<path d="M369 47C368.3 45.6 368.4 44.8 369.2 45L370.4 46V42.6C370.4 41.8 371.6 41.8 371.6 42.6V45L371.8 41.4C371.8 40.6 373.1 40.6 373.1 41.4V44.8L373.4 42C373.4 41.3 374.6 41.3 374.6 42V45.2L375.1 43.2C375.2 42.5 376.4 42.6 376.3 43.3L376 47C375.6 49 374.6 50 373 50C371.2 50 370.2 49.4 369 47Z"/>
<path d="M372.6 38.8C376.4 38.6 379.4 40.8 379.8 43.8" fill="none" stroke="#eaeaea" stroke-width="1.1"/>
<path d="M378 43.4L379.9 46.2L381.6 43.2Z"/>
</g>
</svg>
<!-- /ICONS1 -->
<!-- ICONS2 -->
<svg class="a" style="left:0;top:0;z-index:50" width="1024" height="576" viewBox="0 0 1024 576">
<g fill="none" stroke="#e4e4e4" stroke-width="1.2" stroke-linecap="round" stroke-linejoin="round">
<!-- 1 brush -->
<path d="M19.6 69.6L12.6 76.4" stroke-width="1.7"/>
<!-- 2 eraser outline -->
<g transform="translate(12.6 98.1) rotate(45)"><rect x="-3.7" y="-6.2" width="7.4" height="12.4" rx="0.6" stroke-width="1.2"/></g>
<!-- 3 rect -->
<rect x="8" y="116.3" width="9.6" height="9.9" stroke-width="1.3"/>
<!-- 4 line/pen -->
<path d="M19.6 139.6L13.2 146.4" stroke-width="1.8"/>
<!-- 5 move -->
<path d="M12.6 167.3V180.1M6.2 173.7H19" stroke-width="1.1"/>
<!-- 9 select rect dotted -->
<rect x="7.6" y="272" width="10" height="9.6" stroke="#bdbdbd" stroke-dasharray="1.2 1.5" stroke-width="1.2" stroke-linecap="butt"/>
<!-- 10 lasso dotted -->
<ellipse cx="12.5" cy="300.3" rx="7.6" ry="4.4" transform="rotate(-40 12.5 300.3)" stroke="#b0b0b0" stroke-dasharray="1.3 1.3" stroke-width="1.2" stroke-linecap="butt"/>
<!-- 11 wand -->
<path d="M7.6 328.3L15 320.8" stroke-width="1.9"/>
<path d="M15.8 319.6L16.4 316.6M16.8 320.3L19.4 318.6M17 321.4L19.4 321.8M15 318.8L14 316.9" stroke-width="0.9"/>
<!-- 12 select pen -->
<path d="M7.8 341.6V351.4H17.4" stroke="#bdbdbd" stroke-dasharray="1.2 1.4" stroke-width="1.2" stroke-linecap="butt"/>
<path d="M10.2 341.6H12" stroke-dasharray="1.2 1.4" stroke-linecap="butt"/>
<path d="M19.3 341L13 347.8" stroke-width="2.2"/>
<!-- 13 select eraser -->
<path d="M7.8 364.6V374.6H17.4" stroke="#bdbdbd" stroke-dasharray="1.2 1.4" stroke-width="1.2" stroke-linecap="butt"/>
<g transform="translate(14.6 368.2) rotate(45)"><rect x="-2.9" y="-4.8" width="5.8" height="9.6" rx="0.5" stroke-width="1.1"/></g>
<!-- 15 polygon select -->
<path d="M10 414L14.4 416.8L13.6 421.6H7.6L6.4 416.9Z" stroke-width="1.1"/>
<!-- 16 cutter -->
<path d="M5.8 449.2L15.6 440.4C17 439.2 18.6 439.6 19.3 440.4C20 441.3 19.6 442.6 18.4 443.6L10 449.8Z" stroke-width="1.1"/>
<!-- 17 eyedropper -->
<path d="M6.6 478.4L7.2 476L13.6 469.6L15.7 471.7L9.3 478.1Z" stroke-width="1.2"/>
<path d="M12.6 468.7L16.6 472.7M15.2 467.3L18.4 470.5" stroke-width="1.5"/>
<!-- gradient border -->
<rect x="5.3" y="242.9" width="14.6" height="10.5" stroke="#f0f0f0" stroke-width="1.1"/>
</g>
<g fill="#e6e6e6">
<path d="M11.8 75.8L14 78C13.2 80.2 11 80.8 7.6 80.4C9 79.4 9 77 11.8 75.8Z"/>
<g transform="translate(12.6 98.1) rotate(45)"><rect x="-3.7" y="0.6" width="7.4" height="5.6"/></g>
<circle cx="6.8" cy="142.8" r="1"/><circle cx="9.4" cy="145.6" r="1"/><circle cx="12" cy="148.4" r="1"/>
<path d="M12.6 166.6L10.6 169H14.6ZM12.6 180.8L10.6 178.4H14.6ZM5.5 173.7L7.9 171.7V175.7ZM19.7 173.7L17.3 171.7V175.7Z"/>
<rect x="7.8" y="197.3" width="9.6" height="10" fill="#ececec"/>
<g transform="translate(14.6 368.2) rotate(45)"><rect x="-2.9" y="0.4" width="5.8" height="4.4"/></g>
<path d="M11.4 418.5L18.4 424.6L15.6 425L17.4 428L16.4 428.6L14.6 425.6L12.6 427.4Z"/>
<path d="M5.8 449.2L11.8 443.8L14 446.6L10 449.8Z"/>
<!-- bucket -->
<path d="M5.2 226.6L10.8 232.2L16.4 225.8L10.8 220.2Z" fill="#f0f0f0"/>
<path d="M7.4 223.6C7 221.2 8 218.4 9.8 218.2C11.6 218 12.6 220 11.8 222" fill="none" stroke="#e6e6e6" stroke-width="1.1"/>
<path d="M16.6 224.8C18.6 225.6 19.8 227.6 19.6 229.6C19.4 231.4 17.4 231.8 17 230.2Z" fill="#d86a6a"/>
<path d="M16.6 224.8C17.6 226 17.6 228.4 17 230.2C16 229 16 226.6 16.6 224.8Z" fill="#40d0b0"/>
<!-- T -->
<text x="12.6" y="404.9" text-anchor="middle" font-family="Liberation Serif" font-size="18" font-weight="bold" fill="#e4e4e4">T</text>
<!-- hand -->
<path d="M8.2 497.4C7.2 496.2 6.2 495.6 6.8 494.8C7.6 494 9.2 495.2 10.2 496.4V490.6C10.2 489.6 11.6 489.6 11.6 490.6V495L12 489.4C12 488.4 13.4 488.4 13.4 489.4L13.6 495L14.2 490.2C14.3 489.2 15.7 489.2 15.6 490.2L15.4 495.6L16.6 492.2C16.9 491.4 18.2 491.6 18 492.6L17 498.6C16.4 502.4 14.8 504 12.4 504C10.6 504 9.6 503 8.2 497.4Z" fill="#f4f4f4"/>
</g>
<defs><linearGradient id="gr1" x1="0" y1="0" x2="1" y2="1"><stop offset="0" stop-color="#4a4a4a"/><stop offset="1" stop-color="#d0d0d0"/></linearGradient></defs>
<rect x="5.8" y="243.4" width="13.6" height="9.5" fill="url(#gr1)"/>
</svg>
<!-- /ICONS2 -->
<!-- ICONS3 -->
<svg class="a" style="left:0;top:0;z-index:50" width="1024" height="576" viewBox="0 0 1024 576">
<path d="M104 61.3H100V67.2H107V64.3" fill="none" stroke="#bfbfbf" stroke-width="1.1"/><path d="M103.4 64.9L107.6 60.7" stroke="#bfbfbf" stroke-width="1.1"/><path d="M106.2 60.1L108.2 60.1L108.2 62.1Z" fill="#bfbfbf"/><path d="M113.4 60.5L119 66.9M119 60.5L113.4 66.9" stroke="#dcdcdc" stroke-width="1.7"/>
<path d="M104 200.0H100V205.89999999999998H107V203.0" fill="none" stroke="#bfbfbf" stroke-width="1.1"/><path d="M103.4 203.6L107.6 199.39999999999998" stroke="#bfbfbf" stroke-width="1.1"/><path d="M106.2 198.79999999999998L108.2 198.79999999999998L108.2 200.79999999999998Z" fill="#bfbfbf"/><path d="M113.4 199.2L119 205.6M119 199.2L113.4 205.6" stroke="#dcdcdc" stroke-width="1.7"/>
<path d="M104 334.0H100V339.9H107V337.0" fill="none" stroke="#bfbfbf" stroke-width="1.1"/><path d="M103.4 337.59999999999997L107.6 333.4" stroke="#bfbfbf" stroke-width="1.1"/><path d="M106.2 332.8L108.2 332.8L108.2 334.8Z" fill="#bfbfbf"/><path d="M113.4 333.2L119 339.59999999999997M119 333.2L113.4 339.59999999999997" stroke="#dcdcdc" stroke-width="1.7"/>
<path d="M104 499.8H100V505.7H107V502.8" fill="none" stroke="#bfbfbf" stroke-width="1.1"/><path d="M103.4 503.4L107.6 499.2" stroke="#bfbfbf" stroke-width="1.1"/><path d="M106.2 498.6L108.2 498.6L108.2 500.6Z" fill="#bfbfbf"/><path d="M113.4 499L119 505.4M119 499L113.4 505.4" stroke="#dcdcdc" stroke-width="1.7"/>
<path d="M1005 61.8H1001V67.7H1008V64.8" fill="none" stroke="#bfbfbf" stroke-width="1.1"/><path d="M1004.4 65.4L1008.6 61.2" stroke="#bfbfbf" stroke-width="1.1"/><path d="M1007.2 60.6L1009.2 60.6L1009.2 62.6Z" fill="#bfbfbf"/><path d="M1014.4 61L1020 67.4M1020 61L1014.4 67.4" stroke="#dcdcdc" stroke-width="1.7"/>
<path d="M41.8 177C44.6 177 46.4 179 46.4 181.2C46.4 183 45 183.4 44 183.2C43 183 42.6 183.8 43 184.6C43.4 185.6 42.6 186 41.8 186C39 186 37.2 184 37.2 181.4C37.2 179 39.2 177 41.8 177Z" fill="#eaeaea"/>
<circle cx="39.6" cy="180.4" r="0.8" fill="#3a3a3a"/><circle cx="42" cy="179.2" r="0.8" fill="#3a3a3a"/><circle cx="44.2" cy="180.6" r="0.8" fill="#3a3a3a"/><circle cx="39.4" cy="183" r="0.8" fill="#3a3a3a"/>
<path d="M60.8 176.8C63 176.8 64.6 178.4 64.6 180.2C64.6 181.6 63.4 181.8 62.6 181.8C61.8 181.8 61.6 182.6 62 183.2C62.2 184 61.6 184 60.8 184C58.6 184 57 182.4 57 180.4C57 178.4 58.6 176.8 60.8 176.8Z" fill="#eaeaea"/>
<circle cx="59" cy="179.4" r="0.7" fill="#3a3a3a"/><circle cx="61" cy="178.6" r="0.7" fill="#3a3a3a"/><circle cx="59.2" cy="181.6" r="0.7" fill="#3a3a3a"/>
<rect x="61.2" y="183.2" width="5.8" height="3" fill="#eaeaea"/>
<path d="M34.6 306.8H41L43.4 309.2V316.8H34.6Z" fill="none" stroke="#d8d8d8" stroke-width="1.1"/><path d="M41 306.8V309.2H43.4Z" fill="#d8d8d8"/>
<path d="M54.8 309.4H63.8" stroke="#dcdcdc" stroke-width="1.3"/><path d="M57.4 309L58 307.4H60.6L61.2 309" fill="none" stroke="#dcdcdc" stroke-width="1"/><rect x="55.6" y="310.2" width="7.8" height="6.6" fill="none" stroke="#dcdcdc" stroke-width="1.2"/><path d="M58.2 311V316M60.8 311V316" stroke="#dcdcdc" stroke-width="1.1"/>
<polygon points="103.50,354.40 101.90,355.53 102.40,357.42 100.45,357.26 99.62,359.03 98.23,357.65 96.45,358.47 96.27,356.52 94.38,356.01 95.50,354.40 94.38,352.79 96.27,352.28 96.45,350.33 98.23,351.15 99.62,349.77 100.45,351.54 102.40,351.38 101.90,353.27" fill="#ffffff" stroke="#ffffff" stroke-width="0.6" stroke-linejoin="round"/><circle cx="98.8" cy="354.4" r="1.1" fill="#8a7a70"/>
<polygon points="1002.60,147.20 1000.88,148.47 1001.38,150.54 999.25,150.40 998.30,152.32 996.76,150.84 994.80,151.70 994.57,149.58 992.51,148.98 993.70,147.20 992.51,145.42 994.57,144.82 994.80,142.70 996.76,143.56 998.30,142.08 999.25,144.00 1001.38,143.86 1000.88,145.93" fill="#ffffff" stroke="#ffffff" stroke-width="0.6" stroke-linejoin="round"/><circle cx="997.4" cy="147.2" r="1.2" fill="#8a7a70"/>
<path d="M111.3 218.3L114.3 213.7L117.3 218.3Z" fill="#9a9a9a"/>
<path d="M111.3 294.7L114.3 299.3L117.3 294.7Z" fill="#9a9a9a"/>
<path d="M111.2 352.59999999999997L114.2 347.8L117.2 352.59999999999997Z" fill="#9a9a9a"/>
<path d="M110.8 459.7L113.8 464.3L116.8 459.7Z" fill="#9a9a9a"/>
<path d="M847.7 80.7L850.7 76.10000000000001L853.7 80.7Z" fill="#9a9a9a"/>
<path d="M847.7 470.3L850.7 475.09999999999997L853.7 470.3Z" fill="#9a9a9a"/>
<path d="M849 481L853.6 483.6L849 486.2Z" fill="#9a9a9a"/>
<path d="M835.6 278.3L838.6 273.7L841.6 278.3Z" fill="#9a9a9a"/>
<path d="M836.0 540.4L839 544.8000000000001L842.0 540.4Z" fill="#9a9a9a"/>
<path d="M1011.8 138.3L1014.8 133.7L1017.8 138.3Z" fill="#9a9a9a"/>
<path d="M1011.8 522.0L1014.8 526.5999999999999L1017.8 522.0Z" fill="#9a9a9a"/>
<path d="M129 484L133.4 481.4V486.6Z" fill="#9a9a9a"/>
<path d="M1010.7 100.3L1013.2 103.3L1015.7 100.3Z" fill="#8a8a8a"/>
<path d="M785.9 534.7L788.4 537.7L790.9 534.7Z" fill="#9a9a9a"/>
<path d="M33.7 479.0C32.5 479.0 32.300000000000004 475.8 34.7 475.6C35.1 473.0 36.7 471.8 38.1 471.8C40.1 471.8 41.300000000000004 473.40000000000003 41.5 475.40000000000003C43.7 475.6 43.5 479.0 42.300000000000004 479.0Z" fill="#ececec"/><path d="M38.1 476.8V482.40000000000003" stroke="#3a3a3a" stroke-width="3"/><path d="M38.1 477.40000000000003V481.40000000000003" stroke="#ececec" stroke-width="1.6"/><path d="M35.7 480.8L38.1 483.40000000000003L40.5 480.8Z" fill="#ececec"/>
<path d="M798.7 111.4C797.5 111.4 797.3000000000001 108.2 799.7 108.0C800.1 105.4 801.7 104.2 803.1 104.2C805.1 104.2 806.3000000000001 105.8 806.5 107.8C808.7 108.0 808.5 111.4 807.3000000000001 111.4Z" fill="#ececec"/><path d="M803.1 109.2V114.8" stroke="#3a3a3a" stroke-width="3"/><path d="M803.1 109.8V113.8" stroke="#ececec" stroke-width="1.6"/><path d="M800.7 113.2L803.1 115.8L805.5 113.2Z" fill="#ececec"/>
<path d="M55.4 472.8H61.6L64 475.2V482.8H55.4Z" fill="none" stroke="#d8d8d8" stroke-width="1.1"/><path d="M61.6 472.8V475.2H64Z" fill="#d8d8d8"/>
<path d="M74.2 472.8H80.6L83 475.2V482.8H74.2Z" fill="none" stroke="#d8d8d8" stroke-width="1.1"/><rect x="76" y="476.6" width="2.6" height="2.6" fill="#e0e0e0"/><rect x="78.6" y="479.2" width="2.6" height="2.6" fill="#e0e0e0"/>
<path d="M86.2 476.59999999999997L88.9 479.8L91.60000000000001 476.59999999999997Z" fill="#e0e0e0"/>
<path d="M818.4 113.6V105.2H822L823 106.4H829.2V108.2H821L818.4 113.6Z" fill="#e0e0e0"/><path d="M818.6 113.6L820.8 108.8H829.4L827.2 113.6Z" fill="#f0f0f0"/>
<path d="M653.6 512.9L657.7 517M657.7 512.9L653.6 517" stroke="#e8e8e8" stroke-width="1.1"/>
<path d="M870.6 535.2H877.0L879.6 537.8000000000001V545.6H870.6Z" fill="none" stroke="#d4d4d4" stroke-width="1.1"/><path d="M877.0 535.2V537.8000000000001H879.6Z" fill="#d4d4d4"/>
<path d="M891 535.2H897.4L900 537.8000000000001V545.6H891Z" fill="none" stroke="#d4d4d4" stroke-width="1.1"/><path d="M897.4 535.2V537.8000000000001H900Z" fill="#d4d4d4"/>
<text x="895.4" y="544" text-anchor="middle" font-family="Liberation Sans" font-size="6.5" fill="#d4d4d4">a</text>
<path d="M911.2 535.2H917.6L920.2 537.8000000000001V545.6H911.2Z" fill="none" stroke="#d4d4d4" stroke-width="1.1"/><path d="M917.6 535.2V537.8000000000001H920.2Z" fill="#d4d4d4"/>
<text x="915.6" y="544" text-anchor="middle" font-family="Liberation Sans" font-size="6.5" fill="#d4d4d4">1</text>
<path d="M931.6 545.6V535.2H936.8L939.2 537.6V540" fill="none" stroke="#d4d4d4" stroke-width="1.1"/><path d="M937.6 541.4V547.4M934.6 544.4H940.6" stroke="#f0f0f0" stroke-width="1.4"/>
<path d="M942.1 538.3L944.6 541.3L947.1 538.3Z" fill="#f0f0f0"/>
<path d="M956.4 545.6V536.6H960.4L961.4 537.8H966.8V545.6Z" fill="#e8e8e8"/>
<rect x="979.2" y="538.6" width="8.6" height="7.6" fill="none" stroke="#d4d4d4" stroke-width="1.1"/><path d="M981.8 538.4V536H990.4V543.6H988" fill="none" stroke="#d4d4d4" stroke-width="1.1"/>
</svg>
<!-- /ICONS3 -->
<!-- ICONS4 -->
<svg class="a" style="left:0;top:0;z-index:50" width="1024" height="576" viewBox="0 0 1024 576">
<path d="M7.1 559.6L12.1 558.9V564H7.1Z M12.9 558.8L19.8 557.9V564H12.9Z M7.1 564.8H12.1V569.9L7.1 569.2Z M12.9 564.8H19.8V570.9L12.9 570Z" fill="#f4f4f4"/>
<circle cx="42.2" cy="563" r="4.2" fill="none" stroke="#ececec" stroke-width="1.1"/><path d="M39.2 566.1L34.6 570.7" stroke="#ececec" stroke-width="1.2"/>
<circle cx="67.3" cy="565.1" r="5.1" fill="none" stroke="#f0f0f0" stroke-width="1.5"/>
<path d="M88.3 559.3H96.6M88.3 569.5H96.6" stroke="#e8e8e8" stroke-width="1"/><rect x="89.2" y="561.3" width="6.4" height="6.2" fill="none" stroke="#e8e8e8" stroke-width="1"/><path d="M99.6 562.2V569.6" stroke="#e8e8e8" stroke-width="1.1"/><circle cx="99.6" cy="559.8" r="0.9" fill="#e8e8e8"/>
<circle cx="123.7" cy="564.8" r="6.1" fill="#1878d0"/><path d="M117.7 564C118.2 560.4 121 558.7 123.9 558.7C127.6 558.7 129.9 561.4 129.8 564.3C129.8 566.3 128.2 567.2 126.4 567.1C124.6 567 123.6 565.6 123.6 564.4C123.6 563.2 122.6 562.4 121.2 562.6C119.6 562.8 118.4 563.6 117.7 564Z" fill="#38c890"/><path d="M121.4 565.2C121.4 568 123.8 570.4 126.6 570.2C125 571 123 571.2 121 570.2C119.6 569.2 118.8 567.4 119.6 566.2C120.2 565.4 121.4 565.2 121.4 565.2Z" fill="#50a8f0"/>
<path d="M148.4 561.6V559.8C148.4 558.4 154 558.4 154 559.8V561.6" fill="none" stroke="#f0f0f0" stroke-width="1"/><rect x="145" y="561.6" width="12.2" height="9.2" rx="0.8" fill="#f6f6f6"/><rect x="148.6" y="564" width="2.3" height="2.3" fill="#f25022"/><rect x="151.4" y="564" width="2.3" height="2.3" fill="#7fba00"/><rect x="148.6" y="566.8" width="2.3" height="2.3" fill="#00a4ef"/><rect x="151.4" y="566.8" width="2.3" height="2.3" fill="#ffb900"/>
<path d="M173 560.2H177.4L178.6 561.4H185.1V569.2H173Z" fill="#e8b830"/><rect x="173" y="562.6" width="12.1" height="6.6" fill="#f8d870"/><path d="M175.6 569.2V566.6C175.6 565.6 182.4 565.6 182.4 566.6V569.2" fill="#2a80d0"/><rect x="177.4" y="566.8" width="3.2" height="2.4" fill="#f8d870"/>
<circle cx="207" cy="564.7" r="5.6" fill="#e0463a"/><path d="M207 564.7L201.6 566.2A5.6 5.6 0 0 0 210 569.4Z" fill="#32a852"/><path d="M207 564.7L210 569.4A5.6 5.6 0 0 0 212.3 562.6Z" fill="#fcc934"/><circle cx="207" cy="564.7" r="2.5" fill="#fff"/><circle cx="207" cy="564.7" r="1.9" fill="#4a86e8"/>
<circle cx="235" cy="564.5" r="6.4" fill="#1a3a9a"/><circle cx="235" cy="564.3" r="5.6" fill="#ffffff"/><text x="235" y="566.3" text-anchor="middle" font-family="Liberation Sans" font-size="4.6" font-weight="bold" fill="#1a64d8">Zalo</text>
<circle cx="262.3" cy="564.9" r="5.6" fill="#2596d8"/><text x="262.3" y="568" text-anchor="middle" font-family="Liberation Sans" font-size="8.4" font-weight="bold" fill="#ffffff">S</text>
<rect x="284.2" y="558.9" width="12" height="12" rx="2" fill="#f4f4f4"/><circle cx="290.2" cy="564.9" r="4.2" fill="#22a07a"/><path d="M290.2 564.9L286 564.4A4.2 4.2 0 0 1 289 560.8Z" fill="#e84a3a"/><path d="M290.2 564.9L289 560.8A4.2 4.2 0 0 1 293.6 562.2Z" fill="#f0a020"/><circle cx="291" cy="565.8" r="1.6" fill="#f4f4f4"/>
<rect x="312.1" y="559.5" width="10.9" height="10.4" fill="#1e5ac8"/><path d="M312.1 567.4L316 563.4L319 566L321 564.4L323 566V569.9H312.1Z" fill="#5ab4f8"/><circle cx="320.6" cy="561.8" r="1" fill="#ffffff"/>
<path d="M726.8 570.4C724.4 570.4 724.2 566.8 726.8 566.6C726.6 563.6 729 561.6 731.6 562.2C732.4 560.2 734.4 559.8 735.8 560.6C737.4 561.4 737.8 563 737.4 564.2C739.8 564.4 740.6 566.2 740 567.8C739.6 569.6 738.4 570.4 737 570.4Z" fill="#d8ecfa"/><path d="M731 570.4L730.4 572M734 570.4L733.4 572" stroke="#68b8f0" stroke-width="0.8"/>
<path d="M826.6 568L831 563.4L835.4 568" fill="none" stroke="#f0f0f0" stroke-width="1.1"/>
<rect x="846.4" y="563.6" width="8.6" height="5.6" fill="#f0f0f0"/><path d="M843.2 566.4H846.4M844.4 562.2V565M845.8 562.2V565" stroke="#f0f0f0" stroke-width="0.9"/>
<rect x="861" y="559.6" width="11.3" height="10.8" fill="#f6f0f0"/><path d="M863 561.4L866.6 569L870.2 561.4" fill="none" stroke="#c8203a" stroke-width="1.6"/>
<g fill="none" stroke="#e8e8e8" stroke-width="0.9"><path d="M880.8 567A9 9 0 0 1 889.8 558"/><path d="M882.8 567.6A7 7 0 0 1 889.6 560.8"/><path d="M884.8 568A5 5 0 0 1 889.4 563.2"/></g><circle cx="889.6" cy="569" r="1.1" fill="#f0f0f0"/>
<path d="M895.6 563H898L901.4 560V570.2L898 567.2H895.6Z" fill="none" stroke="#e8e8e8" stroke-width="1"/><path d="M903.4 562.8A3.4 3.4 0 0 1 903.4 567.4M905.4 561A6 6 0 0 1 905.4 569.2" fill="none" stroke="#e8e8e8" stroke-width="0.9"/><path d="M907.4 559.4A8.4 8.4 0 0 1 907.4 570.8" fill="none" stroke="#777" stroke-width="0.9"/>
<path d="M992.8 558.8H1005.2V568.4H1001L999 570.6L997 568.4H992.8Z" fill="#f8f8f8"/><path d="M994.8 561.2H1003.2M994.8 563.4H1003.2M994.8 565.6H1000.6" stroke="#555" stroke-width="0.7"/>
</svg>
<!-- /ICONS4 -->
</body></html>
